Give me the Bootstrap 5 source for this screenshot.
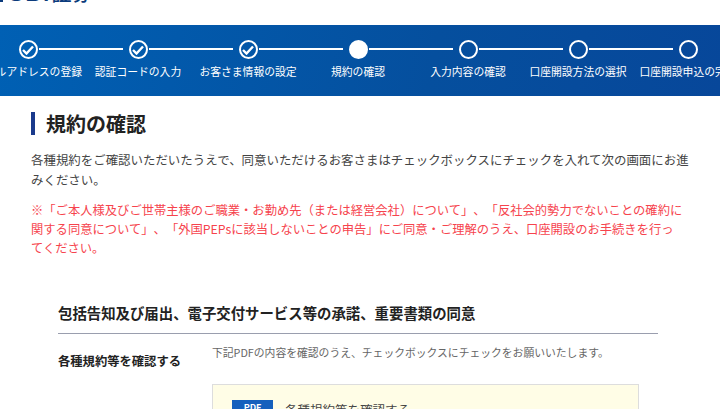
<!DOCTYPE html>
<html lang="ja"><head><meta charset="utf-8"><title>規約の確認</title>
<link href="https://cdn.jsdelivr.net/npm/bootstrap@5.3.0/dist/css/bootstrap.min.css" rel="stylesheet">
<style>
html,body{height:409px;overflow:hidden}
body{font-family:"Noto Sans CJK JP","Liberation Sans",sans-serif;color:#333;font-size:13px;background:#fff;text-spacing-trim:space-all;font-feature-settings:normal}
.logo-strip{height:25px;overflow:hidden;color:#0b3b7c;font-size:20px;font-weight:500;line-height:1;display:flex}
.logo-strip span{display:block;margin-top:-17px;margin-left:6px;white-space:nowrap;height:20px}
.logo-strip b{font-weight:700;font-size:21px;letter-spacing:2.5px;font-family:"Liberation Sans",sans-serif}
.logo-mark{width:3px;height:2px;background:#0b3b7c;flex:none}
.step-bar{height:71px;background:linear-gradient(100deg,#0060b4 0%,#054f9e 60%,#07479a 100%);overflow:hidden;justify-content:center}
.step-item{width:110px;flex:none;position:relative;padding-top:15px;text-align:center;color:#fff;font-size:10.8px;line-height:15px;white-space:nowrap}
.step-item:first-child{margin-left:-4px}
.step-item:not(:last-child)::after{content:"";position:absolute;left:66px;width:84px;top:23px;height:2px;background:#fff}
.step-dot{width:19px;height:19px;border:2px solid #fff;border-radius:50%;margin:0 auto 5px;display:flex;align-items:center;justify-content:center}
.step-dot.now{background:#fff}
.step-label{display:block;margin:0 -20px}
.page-main{padding:16px 31px 0}
.main-head{border-left:4px solid #1a3a8c;padding-left:11px;font-size:20px;font-weight:700;line-height:23px;color:#222;margin:0 0 15px}
.intro{font-size:12.45px;line-height:20px;margin:0 0 11px;color:#444}
.alert-text{font-size:12.3px;line-height:19px;margin:0;color:#f6434d;width:653px}
.terms{margin:45px 30px 0 27px;width:600px}
.terms-title{font-size:14.4px;font-weight:700;color:#222;line-height:20px;padding-bottom:10px;border-bottom:1px solid #9a9eae;margin:0}
.terms-left{width:154px;flex:none;font-size:12.3px;font-weight:700;color:#222;padding-top:18px}
.terms-note{font-size:10.8px;color:#666;padding-top:10px;margin:0 0 24px;line-height:16px}
.pdf-box{background:#fffde6;border:1px solid #ddd;height:60px;padding:15px 19px;display:flex;gap:12px;width:427px}
.pdf-tag{width:41px;height:28px;background:#1560bd;color:#fff;font-size:9px;font-weight:700;text-align:center;line-height:16px}
.pdf-name{font-size:12.5px;line-height:16px;padding-top:2px;color:#444}
</style></head><body>
<div class="logo-strip"><i class="logo-mark"></i><span><b>SBI</b>証券</span></div>
<div class="step-bar d-flex">
<div class="step-item"><div class="step-dot"><svg width="12" height="10" viewBox="0 0 12 10"><path d="M1 5l3.5 3.5L11 1.5" fill="none" stroke="#fff" stroke-width="2.4"/></svg></div><span class="step-label">メールアドレスの登録</span></div>
<div class="step-item"><div class="step-dot"><svg width="12" height="10" viewBox="0 0 12 10"><path d="M1 5l3.5 3.5L11 1.5" fill="none" stroke="#fff" stroke-width="2.4"/></svg></div><span class="step-label">認証コードの入力</span></div>
<div class="step-item"><div class="step-dot"><svg width="12" height="10" viewBox="0 0 12 10"><path d="M1 5l3.5 3.5L11 1.5" fill="none" stroke="#fff" stroke-width="2.4"/></svg></div><span class="step-label">お客さま情報の設定</span></div>
<div class="step-item"><div class="step-dot now"></div><span class="step-label">規約の確認</span></div>
<div class="step-item"><div class="step-dot"></div><span class="step-label">入力内容の確認</span></div>
<div class="step-item"><div class="step-dot"></div><span class="step-label">口座開設方法の選択</span></div>
<div class="step-item"><div class="step-dot"></div><span class="step-label">口座開設申込の完了</span></div>
</div>
<main class="page-main">
<h1 class="main-head">規約の確認</h1>
<p class="intro">各種規約をご確認いただいたうえで、同意いただけるお客さまはチェックボックスにチェックを入れて次の画面にお進みください。</p>
<p class="alert-text">※「ご本人様及びご世帯主様のご職業・お勤め先（または経営会社）について」、「反社会的勢力でないことの確約に関する同意について」、「外国PEPsに該当しないことの申告」にご同意・ご理解のうえ、口座開設のお手続きを行ってください。</p>
<section class="terms">
<h2 class="terms-title">包括告知及び届出、電子交付サービス等の承諾、重要書類の同意</h2>
<div class="d-flex">
<div class="terms-left">各種規約等を確認する</div>
<div><p class="terms-note">下記PDFの内容を確認のうえ、チェックボックスにチェックをお願いいたします。</p>
<div class="pdf-box"><div class="pdf-tag">PDF</div><div class="pdf-name">各種規約等を確認する</div></div></div>
</div>
</section>
</main>
<script src="https://cdn.jsdelivr.net/npm/bootstrap@5.3.0/dist/js/bootstrap.bundle.min.js"></script>
</body></html>
